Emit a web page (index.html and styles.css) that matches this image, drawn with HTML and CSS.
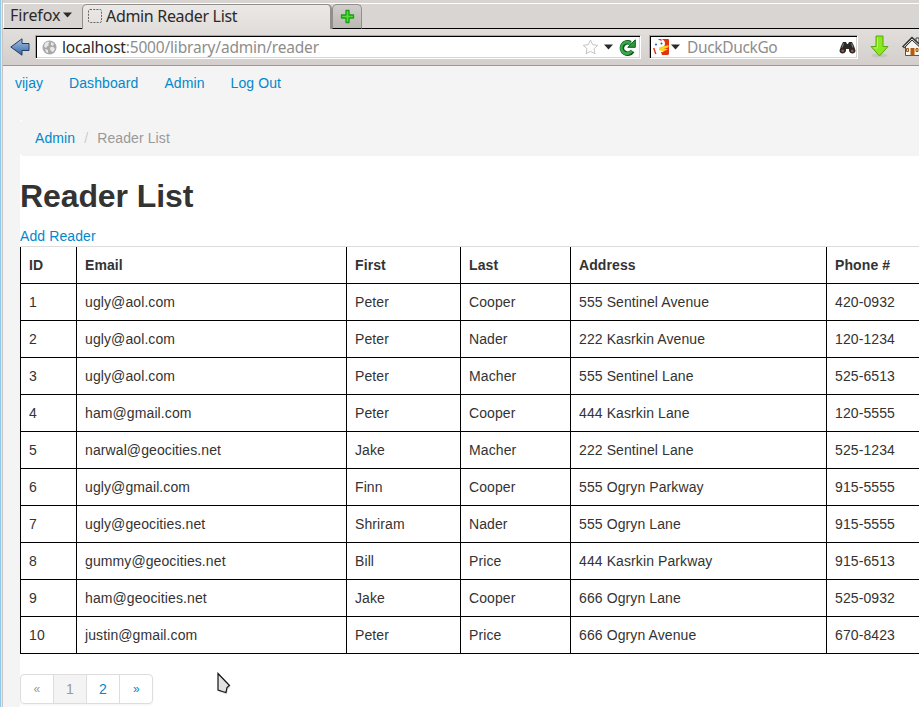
FILE: index.html
```html
<!DOCTYPE html>
<html lang="en">
<head>
<meta charset="utf-8">
<title>Admin Reader List</title>
<link rel="stylesheet" href="styles.css">
</head>
<body>
<div class="window">
  <header class="chrome">
    <div class="tabs">
      <div class="menu"><span class="menu-label">Firefox</span><svg width="9" height="6" viewBox="0 0 9 6"><path d="M0 .5h9L4.500 5.500z" fill="#2b2a29"/></svg></div>
      <div class="tab">
        <svg width="14" height="14" viewBox="0 0 14 14"><rect x=".5" y=".5" width="13" height="13" rx="1.500" fill="none" stroke="#666" stroke-dasharray="2 1.200"/></svg>
        <span class="tab-label">Admin Reader List</span>
      </div>
      <div class="newtab"><svg width="15" height="15" viewBox="0 0 15 15"><path d="M6 1.500h3V6h4.500v3H9v4.500H6V9H1.500V6H6z" fill="#55dc3c" stroke="#18a010" stroke-width="1.300" stroke-linejoin="round"/></svg></div>
      <div class="tabfill"></div>
    </div>
    <div class="toolbar">
      <svg class="back" width="20" height="18" viewBox="0 0 20 18"><defs><linearGradient id="b" x2="0" y2="1"><stop stop-color="#a5c2e4"/><stop offset="1" stop-color="#3465a4"/></linearGradient></defs><path d="M.8 9 12 .8v4.700h7v7h-7v4.700z" fill="url(#b)" stroke="#243d68" stroke-linejoin="round"/></svg>
      <div class="field url">
        <svg class="globe" width="15" height="15" viewBox="0 0 15 15"><circle cx="7.500" cy="7.500" r="7" fill="#a9a9a9"/><path d="M3 3l3-1.500 1.500 1L6 4l1 1-2 1.500L4 8 2 6.500zM9 2l3 1.500L11 6 9 5zM8.500 7l3 0 1.500 2-2 3-2-1-1-2zM3 9l3 1 0 3-2-1z" fill="#e8e8e8"/></svg>
        <span class="url-label"><span class="host">localhost</span>:5000/library/admin/reader</span>
        <svg class="star" width="17" height="16" viewBox="0 0 17 16"><path d="M8.500 1l2.200 4.700 5.100.6-3.800 3.500 1 5-4.500-2.500L4 14.800l1-5L1.200 6.300l5.100-.6z" fill="#fff" stroke="#c4c4c4" stroke-linejoin="round"/></svg>
        <svg class="drop" width="9" height="6" viewBox="0 0 9 6"><path d="M0 .5h9L4.500 5.500z" fill="#2b2a29"/></svg>
        <svg class="reload" width="17" height="17" viewBox="0 0 17 17"><path d="M13.500 12A5.700 5.700 0 1 1 11.500 4" fill="none" stroke="#0b5a1e" stroke-width="4.600"/><path d="M16.300.8V8.300H8.800z" fill="#31993c" stroke="#0b5a1e"/><path d="M13 11.600A5.700 5.700 0 1 1 12 4.800" fill="none" stroke="#3aa848" stroke-width="2.600"/></svg>
      </div>
      <div class="field search">
        <svg width="16" height="16" viewBox="0 0 16 16"><path d="M9 0h6.500L16 1v14l-1 1H7V0z" fill="#e33412"/><path d="M0 0h8c3 1 4 2 4 5l-2 5 1 6H3L1 9 0 8z" fill="#fff"/><path d="M0 9l1.500 0 2 6H2zM5 0h3l1 2-3-1z" fill="#e33412"/><circle cx="3" cy="5.500" r="1" fill="#2458ad"/><circle cx="8.500" cy="4.500" r="1" fill="#2458ad"/><path d="M6 8.500c3-1 5-2 10-2l-1 2-4 1.500 4 0c-2 2-6 3-9 1z" fill="#ffd21f"/><path d="M8 13h7v3H9z" fill="#e33412"/></svg>
        <svg class="sdrop" width="9" height="6" viewBox="0 0 9 6"><path d="M0 .5h9L4.500 5.500z" fill="#2b2a29"/></svg>
        <span class="search-label">DuckDuckGo</span>
        <svg class="binoc" width="17" height="13" viewBox="0 0 17 13"><path d="M4 1h3l1 2h1l1-2h3l2 4 1.500 4.500c0 4-6 4-6.500 0V8H7v1.500c-.5 4-6.500 4-6.500 0L2 5z" fill="#292929"/><path d="M4.500 2.500l-1.500 4M12.500 2.500l1.500 4" stroke="#888"/><circle cx="3.700" cy="9.800" r="1.400" fill="#a5552a"/><circle cx="13.300" cy="9.800" r="1.400" fill="#a5552a"/></svg>
      </div>
      <svg class="down" width="19" height="23" viewBox="0 0 19 23"><ellipse cx="9.500" cy="20.500" rx="8" ry="2" fill="#c8c4c0"/><path d="M6 1h7v10.500h5L9.500 21 1 11.500h5z" fill="#8ae81c" stroke="#55aa10" stroke-linejoin="round"/><path d="M7.500 2.500v10.500H4" fill="none" stroke="#b9f56c"/></svg>
      <svg class="home" width="22" height="21" viewBox="0 0 22 21"><path d="M14 2h3v6h-3z" fill="#eee" stroke="#444"/><path d="M3.500 10 10 4l8 7v8.500H3.500z" fill="#f5f3ee" stroke="#555"/><path d="M1 11.500 10 2.500l10 9" fill="none" stroke="#333" stroke-width="3"/><path d="M1.800 11 10 3l9 8" fill="none" stroke="#ddd"/><path d="M8.500 12h4v7.500h-4z" fill="#b55b10"/><path d="M4.500 12.500h2v3h-2zM14 12.500h2v3h-2z" fill="#f3c875" stroke="#9c5a19"/></svg>
    </div>
  </header>
  <main class="page">
    <nav class="nav"><a>vijay</a><a>Dashboard</a><a>Admin</a><a>Log Out</a></nav>
    <section class="content">
      <div class="breadcrumb"><a>Admin</a><span class="slash">/</span><span class="here">Reader List</span></div>
      <h1>Reader List</h1>
      <a class="add">Add Reader</a>
      <table>
        <colgroup><col class="c1"><col class="c2"><col class="c3"><col class="c4"><col class="c5"><col class="c6"></colgroup>
        <thead><tr><th>ID</th><th>Email</th><th>First</th><th>Last</th><th>Address</th><th>Phone #</th></tr></thead>
        <tbody>
        <tr><td>1</td><td>ugly@aol.com</td><td>Peter</td><td>Cooper</td><td>555 Sentinel Avenue</td><td>420-0932</td></tr>
        <tr><td>2</td><td>ugly@aol.com</td><td>Peter</td><td>Nader</td><td>222 Kasrkin Avenue</td><td>120-1234</td></tr>
        <tr><td>3</td><td>ugly@aol.com</td><td>Peter</td><td>Macher</td><td>555 Sentinel Lane</td><td>525-6513</td></tr>
        <tr><td>4</td><td>ham@gmail.com</td><td>Peter</td><td>Cooper</td><td>444 Kasrkin Lane</td><td>120-5555</td></tr>
        <tr><td>5</td><td>narwal@geocities.net</td><td>Jake</td><td>Macher</td><td>222 Sentinel Lane</td><td>525-1234</td></tr>
        <tr><td>6</td><td>ugly@gmail.com</td><td>Finn</td><td>Cooper</td><td>555 Ogryn Parkway</td><td>915-5555</td></tr>
        <tr><td>7</td><td>ugly@geocities.net</td><td>Shriram</td><td>Nader</td><td>555 Ogryn Lane</td><td>915-5555</td></tr>
        <tr><td>8</td><td>gummy@geocities.net</td><td>Bill</td><td>Price</td><td>444 Kasrkin Parkway</td><td>915-6513</td></tr>
        <tr><td>9</td><td>ham@geocities.net</td><td>Jake</td><td>Cooper</td><td>666 Ogryn Lane</td><td>525-0932</td></tr>
        <tr><td>10</td><td>justin@gmail.com</td><td>Peter</td><td>Price</td><td>666 Ogryn Avenue</td><td>670-8423</td></tr>
        </tbody>
      </table>
      <div class="pagination"><span class="off small">«</span><span class="off current">1</span><a>2</a><a class="small">»</a></div>
    </section>
  </main>
  <svg class="pointer" width="16" height="24" viewBox="0 0 16 24"><path d="M1 1.500 12.500 13.500 10 15.500 9 20.500 5.500 19.500 1 18z" transform="translate(1 2)" fill="#999" opacity=".3"/><path d="M1 1.500 12.500 13.500 10 15.500 9 20.500 5.500 19.500 1 18z" fill="#e2e2e2" stroke="#111" stroke-width="1.200"/></svg>
</div>
</body>
</html>
```
FILE: styles.css
```css
* { box-sizing: border-box; }
body { margin: 0; overflow: hidden; background: #f4f4f4; color: #333; font: 14px/20px "Liberation Sans", Arial, sans-serif; letter-spacing: 0.1px; }
svg { display: block; flex: none; }
a { color: #0088cc; }
.window { position: relative; width: 919px; height: 707px; overflow: hidden; padding-left: 3px; background: linear-gradient(to right, #8ec9ec 0 1px, #d9edf8 1px 2px, #c9c4c1 2px 3px, #f4f4f4 3px); }
.chrome { height: 66px; background: linear-gradient(#d9d5d2 0 29px, #e1dedb 29px, #d4cfcc 65px); border-bottom: 1px solid #9b9793; font-family: "Noto Sans", "Open Sans", sans-serif; color: #2b2a29; white-space: nowrap; }
.tabs { display: flex; height: 29px; padding-top: 1px; border-top: 3px solid #d7d3d0; box-shadow: inset 0 1px #fff; }
.menu { width: 79px; display: flex; align-items: center; gap: 1px; padding: 0 0 2px 6px; border-left: 1px solid #fff; border-bottom: 1px solid #000; }
.menu-label { font-size: 16px; width: 52px; letter-spacing: -0.1px; }
.tab { width: 250px; display: flex; align-items: center; gap: 4px; padding: 0 0 2px 5px; border: 1px solid #928e8a; border-width: 1px 2px 0 1px; border-radius: 5px 5px 0 0; background: linear-gradient(#ebe9e7, #e1dedb); }
.tab-label { font-size: 16px; letter-spacing: -0.32px; }
.newtab { width: 30px; display: flex; align-items: center; justify-content: center; border: 1px solid #928e8a; border-bottom-color: #000; border-radius: 5px 5px 0 0; background: linear-gradient(#d2cecb, #bbb7b3); }
.tabfill { flex: 1; border-bottom: 1px solid #000; }
.toolbar { display: flex; height: 36px; padding: 6px 0 0 7px; overflow: hidden; }
.back { margin-top: 3px; }
.field { height: 24px; display: flex; align-items: center; background: #fff; border: 1px solid #aaa6a2; border-right-color: #fff; border-bottom-color: #fff; box-shadow: inset 1px 1px #000, inset -1px -1px #d7d3d0; flex: none; }
.url { width: 606px; margin-left: 5px; padding-left: 6px; }
.url-label { width: 516px; margin-left: 5px; font-size: 15.500px; letter-spacing: -0.19px; color: #8e8d8c; }
.host { color: #2b2a29; }
.star { margin-left: 4px; }
.drop { margin-left: 5px; }
.reload { margin-left: 6px; }
.search { width: 209px; margin-left: 8px; padding-left: 3px; }
.sdrop { margin-left: 2px; }
.search-label { width: 145px; margin-left: 7px; font-size: 15.500px; letter-spacing: -0.35px; color: #8e8d8c; }
.binoc { margin-left: 7px; }
.down { margin-left: 12px; }
.home { margin-left: 13px; margin-top: 1px; }
.nav { display: flex; height: 54px; padding: 7px 0 0 12px; gap: 26px; }
.nav a:first-child { letter-spacing: 0; }
.content { margin-left: 17px; width: 899px; height: 587px; background: #fff; overflow: hidden; }
.breadcrumb { height: 36px; padding: 8px 15px; background: #f4f4f4; border-radius: 4px 0 0 4px; display: flex; }
.slash { padding: 0 9px; width: 22px; color: #ccc; }
.here { color: #999; }
h1 { margin: 20px 0 10px; font-size: 32px; line-height: 40px; letter-spacing: -0.1px; }
.add { display: block; height: 20px; }
table { width: 1000px; table-layout: fixed; border-spacing: 0; border-top: 1px solid #ddd; border-bottom: 1px solid #000; }
.c1 { width: 56px; } .c2 { width: 270px; } .c3 { width: 114px; } .c4 { width: 110px; } .c5 { width: 256px; }
th, td { height: 37px; padding: 8px; line-height: 20px; text-align: left; border-left: 1px solid #000; border-top: 1px solid #000; }
th { height: 36px; border-top: 0; }
.pagination { display: flex; width: 133px; height: 30px; margin-top: 20px; border: 1px solid #ddd; border-radius: 4px; overflow: hidden; box-shadow: 0 1px 2px rgba(0,0,0,.05); }
.pagination > * { width: 33px; line-height: 28px; text-align: center; border-right: 1px solid #ddd; flex: none; }
.pagination > :last-child { border-right: 0; }
.pagination > .small { font-size: 12px; }
.off { color: #999; }
.current { background: #f4f4f4; }
.pointer { position: absolute; left: 217px; top: 672px; }
```
